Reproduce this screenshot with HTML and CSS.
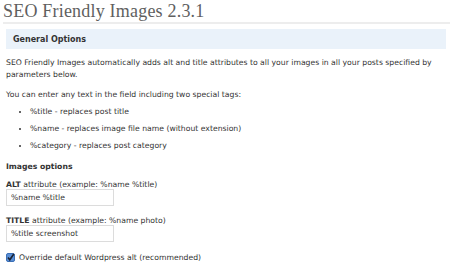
FILE: index.html
```html
<!DOCTYPE html>
<html>
<head>
    <meta charset="utf-8">
    <title>SEO Friendly Images</title>
    <link rel="stylesheet" href="styles.css">
</head>
<body>
    <div class="wrap">
        <h2 class="heading">SEO Friendly Images 2.3.1</h2>
        <div class="box">
            <h3 class="box-title">General Options</h3>
        </div>
        <div class="inside">
            <p>SEO Friendly Images automatically adds alt and title attributes to all your images in all your posts specified by parameters below.</p>
            <p>You can enter any text in the field including two special tags:</p>
            <ul class="tags">
                <li>%title - replaces post title</li>
                <li>%name - replaces image file name (without extension)</li>
                <li>%category - replaces post category</li>
            </ul>
            <h4 class="sub">Images options</h4>
            <div class="field">
                <label><strong>ALT</strong> attribute (example: %name %title)</label>
                <input type="text" class="text" value="%name %title">
            </div>
            <div class="field field-next">
                <label><strong>TITLE</strong> attribute (example: %name photo)</label>
                <input type="text" class="text" value="%title screenshot">
            </div>
            <div class="check">
                <span class="box-check">
                    <svg width="9" height="9" viewBox="0 0 9 9">
                        <rect x="0.5" y="0.5" width="8" height="8" rx="1.5" fill="#5a8fd6" stroke="#3b6fb5"/>
                        <path d="M2 4.5 L3.8 6.8 L7.8 1" fill="none" stroke="#1a2233" stroke-width="1.6"/>
                    </svg>
                </span>
                <span>Override default Wordpress alt (recommended)</span>
            </div>
        </div>
    </div>
</body>
</html>
```

FILE: styles.css
```css
html, body {
    margin: 0;
    padding: 0;
    background: #fff;
}

body {
    font-family: "DejaVu Sans", sans-serif;
    font-size: 7.7px;
    color: #333;
}

.wrap {
    padding: 0 4px 0 3px;
}

.heading {
    font-family: "Liberation Serif", serif;
    font-weight: normal;
    font-size: 18px;
    line-height: 20px;
    letter-spacing: 0.2px;
    color: #5f5f5f;
    margin: 0 -4px 0 0;
    padding: 1px 0 1px;
    border-bottom: 2px solid #ededed;
}

.box {
    background: #eaf2fa;
    margin: 5px 0 0 3px;
    height: 20px;
    display: flex;
    align-items: center;
}

.box-title {
    margin: 0 0 0 7px;
    font-size: 8px;
    font-weight: bold;
    color: #333;
}

.inside {
    padding: 0 0 0 3px;
}

p {
    margin: 8px 0 0;
    line-height: 12px;
}

.tags {
    margin: 2px 0 0;
    padding: 0 0 0 24px;
}

.tags li {
    line-height: 12px;
    margin-top: 5px;
}

.sub {
    font-size: 7.7px;
    font-weight: bold;
    line-height: 12px;
    margin: 9px 0 0;
}

.field {
    margin-top: 8px;
}

.field-next {
    margin-top: 11px;
}

.field label {
    display: block;
    line-height: 8px;
}

.text {
    display: block;
    margin: 0;
    width: 108px;
    height: 17px;
    box-sizing: border-box;
    border: 1px solid #dcdcdc;
    padding: 0 4px;
    font-family: "DejaVu Sans", sans-serif;
    font-size: 7.7px;
    color: #333;
}

.check {
    margin-top: 10px;
    height: 10px;
    display: flex;
    align-items: center;
    gap: 4px;
}

.box-check {
    display: flex;
}
```
